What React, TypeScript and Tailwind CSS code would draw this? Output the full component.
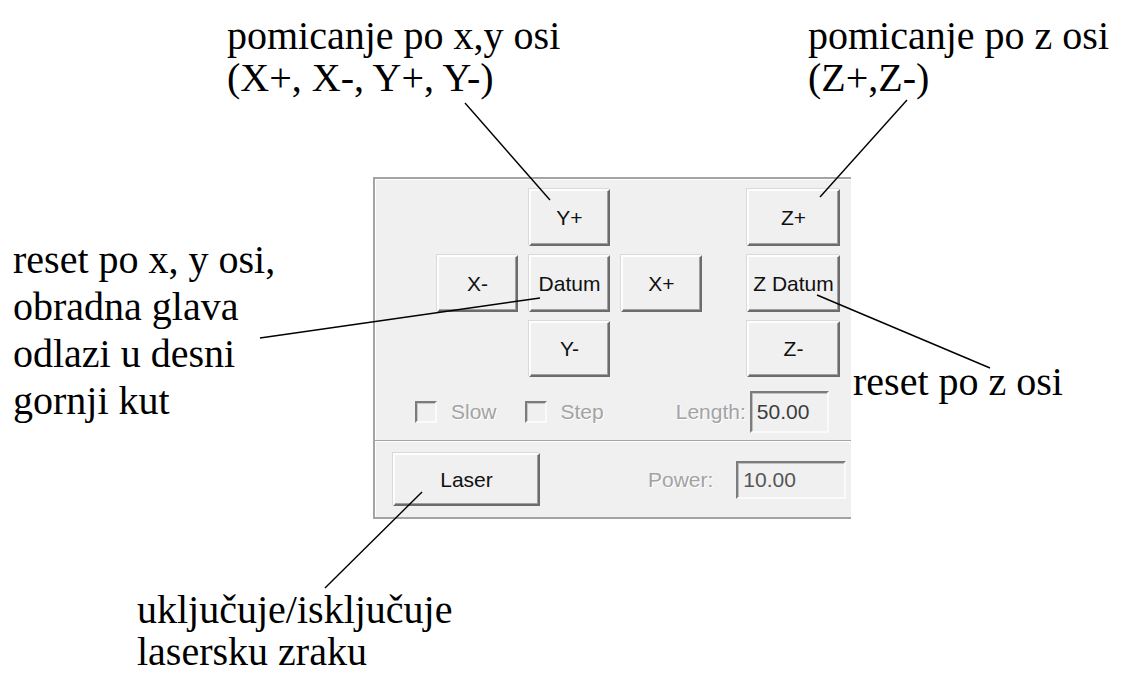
import type { ReactNode } from 'react';

const uiFont = "font-['Liberation_Sans',Arial,sans-serif]";
const serif = "font-['Liberation_Serif','Times_New_Roman',serif]";

function WinButton({ children, className = '' }: { children: ReactNode; className?: string }) {
  return (
    <button
      type="button"
      className={`flex items-center justify-center bg-[#f0f0f0] border-2 border-t-[#fdfdfd] border-l-[#fdfdfd] border-b-[#6c6c6c] border-r-[#6c6c6c] shadow-[inset_-1px_-1px_0_#a0a0a0,-1px_-1px_0_#dadada] text-[21px] text-[#111] ${uiFont} ${className}`}
    >
      {children}
    </button>
  );
}

function Checkbox({ label }: { label: string }) {
  return (
    <label className="flex items-center gap-[14px]">
      <span className="w-[22px] h-[22px] bg-[#f0f0f0] border-2 border-t-[#7c7c7c] border-l-[#7c7c7c] border-b-[#fafafa] border-r-[#fafafa] shadow-[inset_1px_1px_0_#c8c8c8]" />
      <span className="text-[21px] text-[#a3a3a3] [text-shadow:1px_1px_0_#fff]">{label}</span>
    </label>
  );
}

function Field({ value, className = '' }: { value: string; className?: string }) {
  return (
    <div
      className={`flex items-center pl-[5px] bg-[#f0f0f0] border-2 border-t-[#7c7c7c] border-l-[#7c7c7c] border-b-[#fafafa] border-r-[#fafafa] shadow-[inset_1px_1px_0_#c0c0c0] text-[21px] text-[#3c3c3c] ${className}`}
    >
      {value}
    </div>
  );
}

export default function App() {
  return (
    <div className="relative w-[1148px] h-[675px] bg-white overflow-hidden">
      {/* dialog panel */}
      <div className="pl-[373px] pt-[177px]">
        <div className={`w-[478px] h-[342px] flex flex-col bg-[#f0f0f0] border-l-2 border-t-2 border-b-2 border-[#a4a4a4] shadow-[inset_1px_1px_0_#fff] ${uiFont}`}>
          <div className="grid grid-cols-[81px_81px_81px_93px] grid-rows-[57px_57px_56px] gap-x-[11px] gap-y-[9px] pl-[62px] pt-[10px]">
            <WinButton className="col-start-2 row-start-1">Y+</WinButton>
            <WinButton className="col-start-4 row-start-1 ml-[34px] w-[93px]">Z+</WinButton>
            <WinButton className="col-start-1 row-start-2">X-</WinButton>
            <WinButton className="col-start-2 row-start-2">Datum</WinButton>
            <WinButton className="col-start-3 row-start-2">X+</WinButton>
            <WinButton className="col-start-4 row-start-2 ml-[34px] w-[93px]">Z Datum</WinButton>
            <WinButton className="col-start-2 row-start-3">Y-</WinButton>
            <WinButton className="col-start-4 row-start-3 ml-[34px] w-[93px]">Z-</WinButton>
          </div>

          <div className="flex items-center mt-[14px] pl-[40px] h-[42px]">
            <Checkbox label="Slow" />
            <div className="ml-[28px]">
              <Checkbox label="Step" />
            </div>
            <span className="ml-[72px] text-[21px] text-[#a3a3a3] [text-shadow:1px_1px_0_#fff]">Length:</span>
            <Field value="50.00" className="ml-[4px] w-[79px] h-[42px]" />
          </div>

          <div className="mt-[7px] border-t border-[#a4a4a4] border-b border-b-white" />

          <div className="flex items-center mt-[11px] pl-[18px]">
            <WinButton className="w-[147px] h-[53px]">Laser</WinButton>
            <span className="ml-[108px] text-[21px] text-[#a3a3a3] [text-shadow:1px_1px_0_#fff]">Power:</span>
            <Field value="10.00" className="ml-[23px] w-[110px] h-[38px] text-[#555]" />
          </div>
        </div>
      </div>

      {/* callout lines */}
      <svg className="absolute inset-0 pointer-events-none" width="1148" height="675">
        <g stroke="#000" strokeWidth="1.4" fill="none">
          <line x1="465" y1="103" x2="550" y2="200" />
          <line x1="907" y1="100" x2="820" y2="197" />
          <line x1="260" y1="338" x2="540" y2="298" />
          <line x1="817" y1="295" x2="990" y2="368" />
          <line x1="422" y1="492" x2="325" y2="588" />
        </g>
      </svg>

      {/* callout texts */}
      <div className={`absolute left-[227px] top-[15px] text-[40px] leading-[42px] text-black ${serif}`}>
        <p>pomicanje po x,y osi</p>
        <p>(X+, X-, Y+, Y-)</p>
      </div>
      <div className={`absolute left-[808px] top-[15px] text-[40px] leading-[42px] text-black ${serif}`}>
        <p>pomicanje po z osi</p>
        <p>(Z+,Z-)</p>
      </div>
      <div className={`absolute left-[13px] top-[236px] text-[40px] leading-[47px] text-black ${serif}`}>
        <p>reset po x, y osi,</p>
        <p>obradna glava</p>
        <p>odlazi u desni</p>
        <p>gornji kut</p>
      </div>
      <div className={`absolute left-[853px] top-[361px] text-[40px] leading-[42px] text-black ${serif}`}>
        <p>reset po z osi</p>
      </div>
      <div className={`absolute left-[137px] top-[589px] text-[40px] leading-[42px] text-black ${serif}`}>
        <p>uključuje/isključuje</p>
        <p>lasersku zraku</p>
      </div>
    </div>
  );
}
